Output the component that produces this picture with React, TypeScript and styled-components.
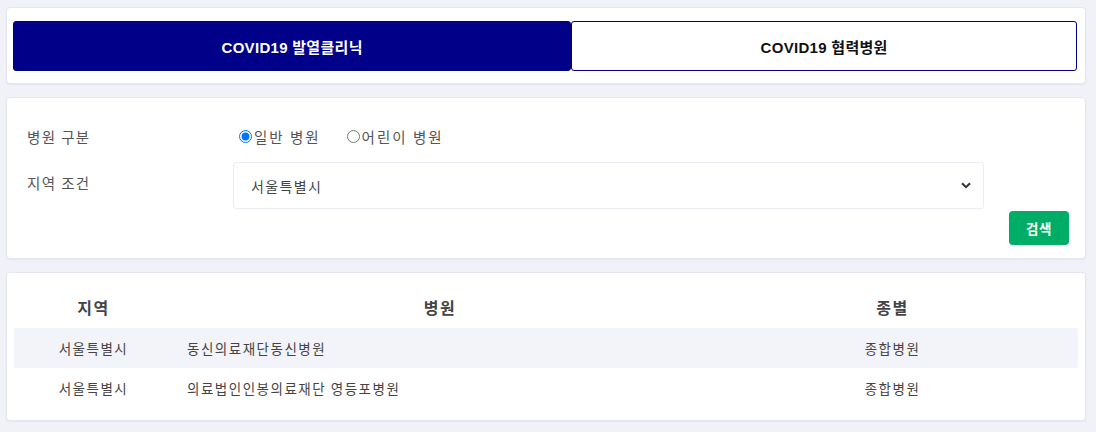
import styled, { createGlobalStyle } from 'styled-components';
import { useState } from 'react';

const GlobalStyle = createGlobalStyle`
	html, body {
		margin: 0;
		padding: 0;
		background: #f1f1f8;
		font-family: 'Liberation Sans', 'Noto Sans CJK KR', sans-serif;
		color: #444;
	}
`;

const Page = styled.div`
	padding: 7px 10px 10px 6px;
	display: flex;
	flex-direction: column;
	gap: 13px;
`;

const Card = styled.div`
	background: #fff;
	border: 1px solid #e6e6f2;
	border-radius: 4px;
	box-shadow: 0 1px 2px rgba(40, 40, 120, 0.06);
`;

const TabCard = styled(Card)`
	padding: 13px 8px 12px 6px;
	display: flex;
`;

interface TabProps {
	active?: boolean;
}

const Tab = styled.button<TabProps>`
	flex: ${(props) => (props.active ? '559' : '505')};
	height: 50px;
	border: 1px solid #000080;
	border-radius: 3px;
	background: ${(props) => (props.active ? '#000088' : '#fff')};
	color: ${(props) => (props.active ? '#fff' : '#111')};
	font-family: 'Liberation Sans', 'Noto Sans CJK KR', sans-serif;
	font-weight: bold;
	font-size: 15px;
	letter-spacing: 0.3px;
	cursor: pointer;
`;

const SearchCard = styled(Card)`
	padding: 19px 16px 13px 20px;
	display: flex;
	flex-direction: column;
`;

const FormRow = styled.div`
	display: grid;
	grid-template-columns: 206px 751px;
	align-items: center;
`;

const Label = styled.div`
	font-family: 'Noto Sans CJK KR', sans-serif;
	font-size: 14.5px;
	color: #555;
	letter-spacing: 1.4px;
`;

const RadioGroup = styled.div`
	display: flex;
	gap: 24px;
	padding-left: 4px;
	height: 38px;
	align-items: center;
`;

const RadioLabel = styled.label`
	display: flex;
	align-items: center;
	font-family: 'Noto Sans CJK KR', sans-serif;
	font-size: 14.5px;
	color: #555;
	letter-spacing: 2px;
	cursor: pointer;

	input {
		margin: 0 2px 0 2px;
		width: 13px;
		height: 13px;
	}
`;

const SelectBox = styled.div`
	margin-top: 7px;
	height: 47px;
	box-sizing: border-box;
	border: 1px solid #ececf2;
	border-radius: 3px;
	display: flex;
	align-items: center;
	justify-content: space-between;
	padding: 0 12px 0 17px;
	font-family: 'Noto Sans CJK KR', sans-serif;
	font-size: 14px;
	color: #444;
	letter-spacing: 1.4px;
`;

const ButtonRow = styled.div`
	display: flex;
	justify-content: flex-end;
	margin-top: 2px;
`;

const SearchButton = styled.button`
	width: 60px;
	height: 34px;
	background: #00ad66;
	border: none;
	border-radius: 4px;
	color: #fff;
	font-family: 'Noto Sans CJK KR', sans-serif;
	font-weight: bold;
	font-size: 13.5px;
	letter-spacing: 0.5px;
`;

const TableCard = styled(Card)`
	padding: 16px 7px 12px 7px;
`;

const Table = styled.div`
	display: flex;
	flex-direction: column;
`;

const Row = styled.div<{ striped?: boolean }>`
	display: grid;
	grid-template-columns: 159px 534px 1fr;
	height: 40px;
	align-items: center;
	background: ${(props) => (props.striped ? '#f3f4f9' : 'transparent')};
	border-radius: 2px;
`;

const HeadRow = styled(Row)`
	height: 39px;
	padding-bottom: 3px;
	box-sizing: border-box;
`;

const HeadCell = styled.div`
	text-align: center;
	font-family: 'Noto Sans CJK KR', sans-serif;
	font-weight: bold;
	font-size: 16px;
	color: #444;
	letter-spacing: 1.5px;
`;

const Cell = styled.div<{ left?: boolean }>`
	text-align: ${(props) => (props.left ? 'left' : 'center')};
	padding-left: ${(props) => (props.left ? '14px' : '0')};
	font-family: 'Noto Sans CJK KR', sans-serif;
	font-size: 13.5px;
	color: #444;
	letter-spacing: 1.5px;
`;

const Chevron = () => (
	<svg width="10" height="7" viewBox="0 0 10 7">
		<path d="M1 1.2 L5 5.2 L9 1.2" fill="none" stroke="#333" strokeWidth="2" />
	</svg>
);

const hospitals = [
	{ region: '서울특별시', name: '동신의료재단동신병원', kind: '종합병원' },
	{ region: '서울특별시', name: '의료법인인봉의료재단 영등포병원', kind: '종합병원' },
];

const App = () => {
	const [tab, setTab] = useState(0);
	const [type, setType] = useState('general');

	return (
		<>
			<GlobalStyle />
			<Page>
				<TabCard>
					<Tab active={tab === 0} onClick={() => setTab(0)}>
						COVID19 발열클리닉
					</Tab>
					<Tab active={tab === 1} onClick={() => setTab(1)}>
						COVID19 협력병원
					</Tab>
				</TabCard>
				<SearchCard>
					<FormRow>
						<Label>병원 구분</Label>
						<RadioGroup>
							<RadioLabel>
								<input
									type="radio"
									checked={type === 'general'}
									onChange={() => setType('general')}
								/>
								일반 병원
							</RadioLabel>
							<RadioLabel>
								<input
									type="radio"
									checked={type === 'child'}
									onChange={() => setType('child')}
								/>
								어린이 병원
							</RadioLabel>
						</RadioGroup>
					</FormRow>
					<FormRow>
						<Label>지역 조건</Label>
						<SelectBox>
							<span>서울특별시</span>
							<Chevron />
						</SelectBox>
					</FormRow>
					<ButtonRow>
						<SearchButton>검색</SearchButton>
					</ButtonRow>
				</SearchCard>
				<TableCard>
					<Table>
						<HeadRow>
							<HeadCell>지역</HeadCell>
							<HeadCell>병원</HeadCell>
							<HeadCell>종별</HeadCell>
						</HeadRow>
						{hospitals.map((item, i) => (
							<Row key={item.name} striped={i % 2 === 0}>
								<Cell>{item.region}</Cell>
								<Cell left>{item.name}</Cell>
								<Cell>{item.kind}</Cell>
							</Row>
						))}
					</Table>
				</TableCard>
			</Page>
		</>
	);
};

export default App;
